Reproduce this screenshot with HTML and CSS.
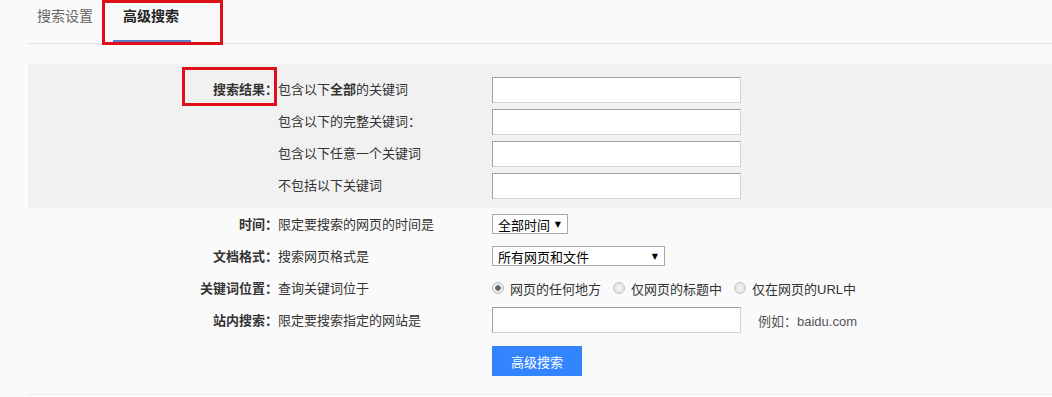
FILE: index.html
```html
<!DOCTYPE html>
<html lang="zh-CN">
<head>
    <meta charset="UTF-8">
    <title>高级搜索</title>
    <link rel="stylesheet" href="styles.css">
</head>
<body>

<div class="tabs">
    <div class="tab">搜索设置</div>
    <div class="tab active">高级搜索</div>
</div>

<div class="form">
    <div class="group">
        <div class="row">
            <div class="label">搜索结果：</div>
            <div class="desc">包含以下<b>全部</b>的关键词</div>
            <div class="field"><input type="text" class="box"></div>
        </div>
        <div class="row">
            <div class="label"></div>
            <div class="desc">包含以下的完整关键词：</div>
            <div class="field"><input type="text" class="box"></div>
        </div>
        <div class="row">
            <div class="label"></div>
            <div class="desc">包含以下任意一个关键词</div>
            <div class="field"><input type="text" class="box"></div>
        </div>
        <div class="row">
            <div class="label"></div>
            <div class="desc">不包括以下关键词</div>
            <div class="field"><input type="text" class="box"></div>
        </div>
    </div>

    <div class="row">
        <div class="label">时间：</div>
        <div class="desc">限定要搜索的网页的时间是</div>
        <div class="field">
            <div class="select short"><span>全部时间</span><span class="arrow">▼</span></div>
        </div>
    </div>
    <div class="row">
        <div class="label">文档格式：</div>
        <div class="desc">搜索网页格式是</div>
        <div class="field">
            <div class="select long"><span>所有网页和文件</span><span class="arrow">▼</span></div>
        </div>
    </div>
    <div class="row">
        <div class="label">关键词位置：</div>
        <div class="desc">查询关键词位于</div>
        <div class="field radios">
            <label class="radio"><span class="dot checked"></span>网页的任何地方</label>
            <label class="radio"><span class="dot"></span>仅网页的标题中</label>
            <label class="radio"><span class="dot"></span>仅在网页的URL中</label>
        </div>
    </div>
    <div class="row">
        <div class="label">站内搜索：</div>
        <div class="desc">限定要搜索指定的网站是</div>
        <div class="field">
            <input type="text" class="box">
            <span class="hint">例如：baidu.com</span>
        </div>
    </div>
    <div class="row submit">
        <div class="label"></div>
        <div class="desc"></div>
        <div class="field"><button class="btn">高级搜索</button></div>
    </div>
</div>

<!-- annotation boxes -->
<div class="mark mark-tab"></div>
<div class="mark mark-label"></div>

</body>
</html>
```

FILE: styles.css
```css
body {
    margin: 0;
    background-color: #fafafa;
    font-family: "Liberation Sans", Arial, "Noto Sans CJK SC", sans-serif;
    font-size: 13px;
    color: #333;
    position: relative;
    height: 397px;
    overflow: hidden;
}

.tabs {
    display: flex;
    gap: 20px;
    height: 43px;
    margin-left: 28px;
    padding-left: 9px;
    border-bottom: 1px solid #e3e3e3;
}

.tab {
    font-size: 14px;
    line-height: 20px;
    padding-top: 6px;
    color: #666;
}

.tab.active {
    padding: 6px 12px 0 10px;
    height: 34px;
    color: #222;
    font-weight: bold;
    border-bottom: 3px solid #5b7cc6;
}

.form {
    margin: 20px 0 0 28px;
    border-bottom: 1px solid #ebebeb;
    padding-bottom: 18px;
}

.group {
    background-color: #f1f1f1;
    padding: 10px 0 6px;
}

.row {
    display: grid;
    grid-template-columns: 250px 214px 1fr;
    align-items: center;
    height: 32px;
}

.label {
    text-align: right;
    font-weight: bold;
    color: #333;
    padding-bottom: 1px;
}

.desc {
    color: #333;
    padding-bottom: 1px;
}

.group .label,
.group .desc {
    padding-bottom: 4px;
}

.field {
    display: flex;
    align-items: center;
}

.box {
    box-sizing: border-box;
    width: 249px;
    height: 26px;
    margin: 0;
    border: 1px solid;
    border-color: #a0a0a0 #d3d3d3 #d3d3d3 #a0a0a0;
    background-color: #fff;
}

.select {
    box-sizing: border-box;
    height: 20px;
    display: flex;
    align-items: center;
    justify-content: space-between;
    padding: 0 6px 0 5px;
    border: 1px solid #a9a9a9;
    background-color: #fff;
    color: #000;
}

.select.short {
    width: 76px;
}

.select.long {
    width: 173px;
}

.select .arrow {
    font-size: 8px;
    font-family: "DejaVu Sans", sans-serif;
}

.radios {
    gap: 12px;
}

.radio {
    display: flex;
    align-items: center;
    color: #333;
}

.dot {
    box-sizing: border-box;
    width: 12px;
    height: 12px;
    margin-right: 6px;
    border-radius: 50%;
    border: 1px solid #c4c4c4;
    background: radial-gradient(circle, #f4f4f4 0, #dcdcdc 100%);
}

.dot.checked {
    background: radial-gradient(circle, #666 0, #666 2.5px, #ececec 3px);
    border-color: #b8b8b8;
}

.hint {
    margin-left: 17px;
    color: #555;
}

.submit {
    height: 40px;
    align-items: end;
}

.btn {
    width: 90px;
    height: 30px;
    border: none;
    background-color: #3385ff;
    color: #fff;
    font-family: inherit;
    font-size: 13px;
    padding: 0;
    cursor: pointer;
}

.mark {
    position: absolute;
    box-sizing: border-box;
    border: 3px solid #e0101a;
}

.mark-tab {
    left: 102px;
    top: 0;
    width: 121px;
    height: 45px;
}

.mark-label {
    left: 182px;
    top: 67px;
    width: 95px;
    height: 39px;
}
```
